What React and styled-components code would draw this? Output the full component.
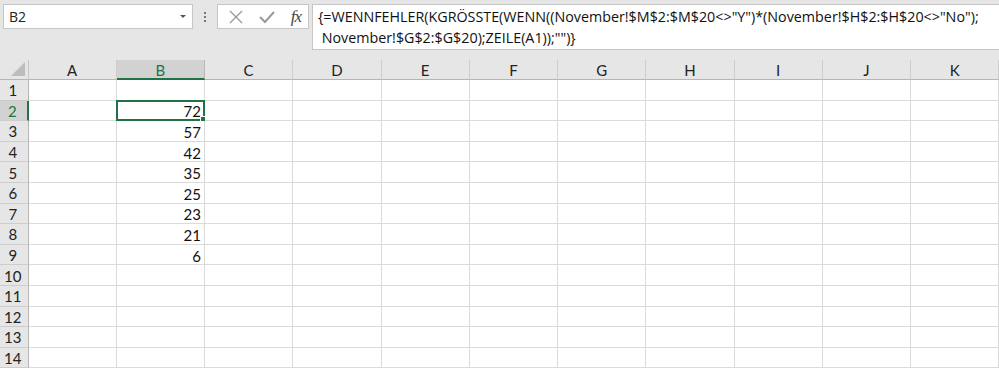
import React from 'react';
import styled, { createGlobalStyle } from 'styled-components';

const GlobalStyle = createGlobalStyle`
  html, body {
    margin: 0;
    padding: 0;
    background: #e6e6e6;
    overflow: hidden;
  }
`;

const COLS = ['A', 'B', 'C', 'D', 'E', 'F', 'G', 'H', 'I', 'J', 'K'];
const ROWS = 14;
const values = { 2: '72', 3: '57', 4: '42', 5: '35', 6: '25', 7: '23', 8: '21', 9: '6' };

const Page = styled.div`
  width: 999px;
  height: 368px;
  overflow: hidden;
  background: #e6e6e6;
`;

const FormulaBarRow = styled.div`
  display: flex;
  align-items: flex-start;
  height: 60px;
  padding: 4px 0 0 3px;
  box-sizing: border-box;
`;

const NameBox = styled.div`
  display: flex;
  align-items: center;
  justify-content: space-between;
  width: 190px;
  height: 25px;
  box-sizing: border-box;
  background: #fff;
  border: 1px solid #c6c6c6;
  padding: 0 6px 0 5px;
  font-family: 'Open Sans', 'Noto Sans', sans-serif;
  font-size: 14px;
  color: #222;
`;

const DropArrow = styled.span`
  width: 0;
  height: 0;
  border-left: 3px solid transparent;
  border-right: 3px solid transparent;
  border-top: 3px solid #555;
`;

const Grip = styled.div`
  display: flex;
  flex-direction: column;
  gap: 2px;
  width: 24px;
  align-items: center;
  padding-top: 8px;

  span {
    width: 2px;
    height: 2px;
    background: #777;
  }
`;

const FxBox = styled.div`
  display: flex;
  align-items: center;
  justify-content: space-between;
  width: 92px;
  height: 25px;
  box-sizing: border-box;
  background: #fff;
  border: 1px solid #c6c6c6;
  padding: 0 7px 0 10px;
`;

const FxLabel = styled.span`
  font-family: 'Liberation Serif', serif;
  font-style: italic;
  font-size: 17px;
  color: #444;
  letter-spacing: -1px;
`;

const FormulaBox = styled.div`
  flex: 1;
  margin-left: 3px;
  height: 46px;
  box-sizing: border-box;
  background: #fff;
  border: 1px solid #c6c6c6;
  border-right: none;
  padding: 1px 0 0 5px;
  font-family: 'Open Sans', 'Noto Sans', sans-serif;
  font-size: 14.3px;
  line-height: 21px;
  color: #111;
  white-space: pre;
`;

const Sheet = styled.div`
  display: grid;
  grid-template-columns: 28.5px repeat(11, 88.25px);
  grid-template-rows: 20px repeat(${ROWS}, 20.6px);
  font-family: Lato, 'Liberation Sans', sans-serif;
  font-size: 15px;
`;

const Corner = styled.div`
  position: relative;
  background: #e6e6e6;
  border-right: 1px solid #c6c6c6;
  border-bottom: 1px solid #b5b5b5;
  box-sizing: border-box;

  &::after {
    content: '';
    position: absolute;
    right: 3px;
    bottom: 3px;
    border-left: 14px solid transparent;
    border-bottom: 14px solid #bcbcbc;
  }
`;

const ColHead = styled.div`
  display: flex;
  align-items: center;
  justify-content: center;
  box-sizing: border-box;
  background: ${(p) => (p.$active ? '#d2d2d2' : '#e6e6e6')};
  color: ${(p) => (p.$active ? '#217346' : '#222')};
  border-right: 1px solid ${(p) => (p.$active ? '#b7b7b7' : '#cdcdcd')};
  border-bottom: ${(p) => (p.$active ? '2px solid #217346' : '1px solid #b5b5b5')};
  padding-top: ${(p) => (p.$active ? '1px' : '0')};
`;

const RowHead = styled.div`
  display: flex;
  align-items: center;
  justify-content: center;
  box-sizing: border-box;
  background: ${(p) => (p.$active ? '#d2d2d2' : '#e6e6e6')};
  color: ${(p) => (p.$active ? '#217346' : '#222')};
  border-right: ${(p) => (p.$active ? '2px solid #217346' : '1px solid #b5b5b5')};
  border-bottom: 1px solid #cdcdcd;
  padding: 1px 2px 0 0;
`;

const Cell = styled.div`
  position: relative;
  display: flex;
  align-items: center;
  justify-content: flex-end;
  box-sizing: border-box;
  background: #fff;
  color: #111;
  border-right: 1px solid #dadada;
  border-bottom: 1px solid #dadada;
  padding-right: 3px;
`;

const Selection = styled.div`
  position: absolute;
  left: -1px;
  top: -1px;
  right: -1px;
  bottom: -1px;
  border: 2px solid #217346;
  pointer-events: none;

  &::after {
    content: '';
    position: absolute;
    right: -4px;
    bottom: -4px;
    width: 5px;
    height: 5px;
    background: #217346;
    border: 1px solid #fff;
  }
`;

const CellText = styled.span`
  position: relative;
  top: 1px;
`;

export default function App() {
  const rows = [];
  for (let r = 1; r <= ROWS; r++) {
    rows.push(
      <React.Fragment key={r}>
        <RowHead $active={r === 2}>{r}</RowHead>
        {COLS.map((c) => (
          <Cell key={c}>
            {c === 'B' && values[r] && <CellText>{values[r]}</CellText>}
            {c === 'B' && r === 2 && <Selection />}
          </Cell>
        ))}
      </React.Fragment>
    );
  }

  return (
    <Page>
      <GlobalStyle />
      <FormulaBarRow>
        <NameBox>
          B2
          <DropArrow />
        </NameBox>
        <Grip>
          <span />
          <span />
          <span />
        </Grip>
        <FxBox>
          <svg width="16" height="16" viewBox="0 0 16 16">
            <path d="M2 2 L14 14 M14 2 L2 14" stroke="#9a9a9a" strokeWidth="1.4" fill="none" />
          </svg>
          <svg width="18" height="16" viewBox="0 0 18 16">
            <path d="M2 8 L7 13 L16 3" stroke="#9a9a9a" strokeWidth="2" fill="none" />
          </svg>
          <FxLabel>fx</FxLabel>
        </FxBox>
        <FormulaBox>
          {'{=WENNFEHLER(KGRÖSSTE(WENN((November!$M$2:$M$20<>"Y")*(November!$H$2:$H$20<>"No");\n November!$G$2:$G$20);ZEILE(A1));"")}'}
        </FormulaBox>
      </FormulaBarRow>
      <Sheet>
        <Corner />
        {COLS.map((c) => (
          <ColHead key={c} $active={c === 'B'}>
            {c}
          </ColHead>
        ))}
        {rows}
      </Sheet>
    </Page>
  );
}
